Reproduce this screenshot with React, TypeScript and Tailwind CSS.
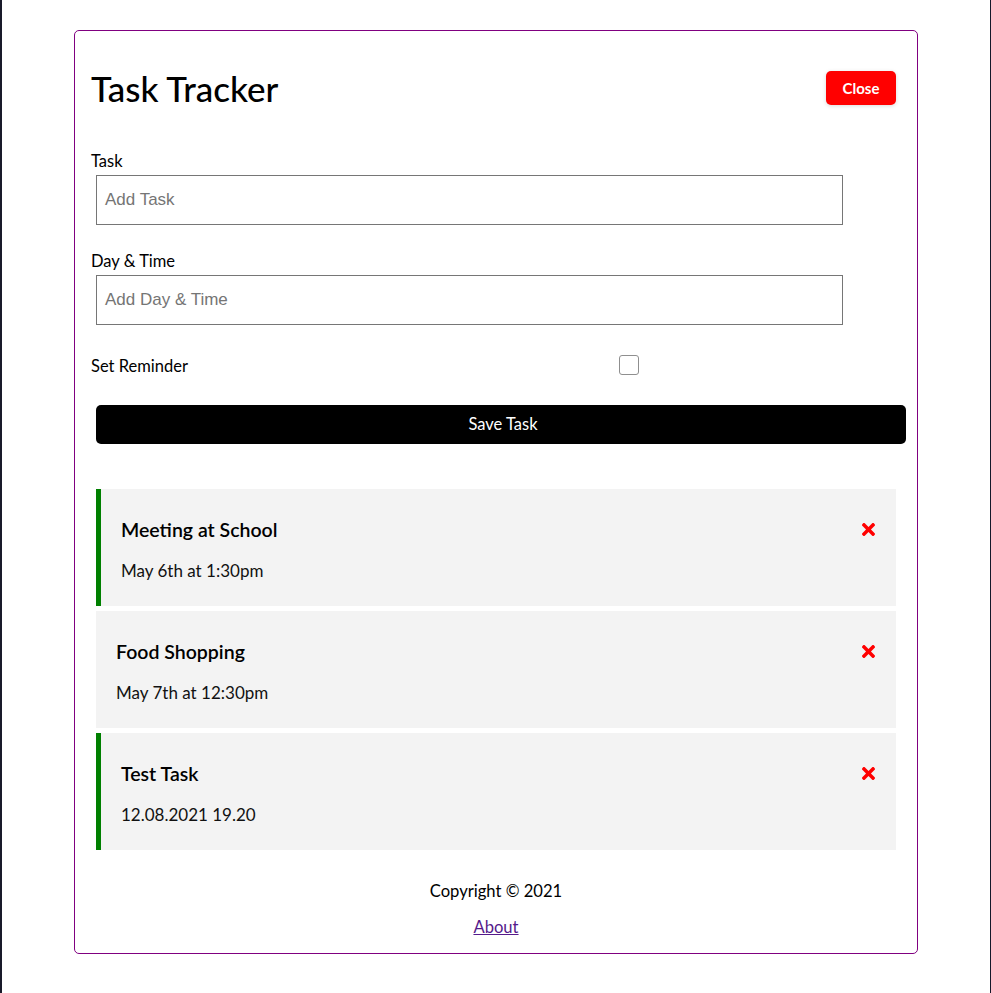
import React from "react";
import { FaTimes } from "react-icons/fa";

const tasks = [
  { title: "Meeting at School", day: "May 6th at 1:30pm", reminder: true },
  { title: "Food Shopping", day: "May 7th at 12:30pm", reminder: false },
  { title: "Test Task", day: "12.08.2021 19.20", reminder: true },
];

export default function App() {
  return (
    <div className="flex min-h-[993px] w-full bg-white" style={{ fontFamily: "Lato, 'Noto Sans', sans-serif" }}>
      <div className="w-[2px] shrink-0 bg-[#191a2a]" />
      <div className="flex-1 pt-[30px]">
        <div className="mx-auto flex h-[924px] w-[844px] flex-col rounded-[5px] border border-[#800080] px-[16px] pt-[27px] text-black">
          <header className="flex h-[60px] items-center justify-between">
            <h1 className="text-[35px] font-medium leading-none">Task Tracker</h1>
            <button className="mr-[5px] flex h-[34px] w-[70px] items-center justify-center rounded-[5px] bg-[#ff0000] text-[15px] font-bold text-white shadow-[0_1px_4px_rgba(0,0,0,0.15)]">
              Close
            </button>
          </header>

          <div className="mt-[31px] text-[16.5px] leading-[24px]">Task</div>
          <div className="mt-[2px] ml-[5px] flex h-[50px] w-[747px] items-center border border-[#767676] px-[8px] text-[17px] text-[#757575]" style={{ fontFamily: "'Liberation Sans', Arial, sans-serif" }}>
            Add Task
          </div>

          <div className="mt-[24px] text-[16.5px] leading-[24px]">Day &amp; Time</div>
          <div className="mt-[2px] ml-[5px] flex h-[50px] w-[747px] items-center border border-[#767676] px-[8px] text-[17px] text-[#757575]" style={{ fontFamily: "'Liberation Sans', Arial, sans-serif" }}>
            Add Day &amp; Time
          </div>

          <div className="mt-[28px] flex h-[24px] items-center">
            <div className="w-[270px] pt-[1px] text-[16.5px] leading-[24px]">Set Reminder</div>
            <div className="flex flex-1 justify-center pr-[4px]">
              <div className="h-[20px] w-[20px] rounded-[3px] border border-[#8f8f8f] bg-white" />
            </div>
          </div>

          <button className="mt-[28px] ml-[5px] flex h-[39px] w-[810px] shrink-0 items-center justify-center rounded-[5px] bg-black pl-[4px] text-[16.5px] text-white">
            Save Task
          </button>

          <div className="mt-[45px] flex flex-col gap-[5px] pl-[5px] pr-[5px]">
            {tasks.map((t) => (
              <div
                key={t.title}
                className={`flex h-[117px] w-[800px] justify-between bg-[#f3f3f3] pr-[18px] ${t.reminder ? "border-l-[5px] border-[#008000] pl-[20px]" : "pl-[20px]"}`}
              >
                <div className="flex flex-col pt-[29px]">
                  <div className="text-[19.5px] font-semibold leading-[24px]">{t.title}</div>
                  <div className="mt-[17px] text-[17px] leading-[24px] text-[#111]">{t.day}</div>
                </div>
                <div className="pt-[31px]">
                  <FaTimes className="text-[#ff0000]" size={19} />
                </div>
              </div>
            ))}
          </div>

          <footer className="mt-[29px] flex flex-col items-center">
            <div className="text-[16.6px] leading-[24px]">Copyright © 2021</div>
            <a href="#" className="mt-[12px] text-[16.6px] leading-[24px] text-[#551a8b] underline">
              About
            </a>
          </footer>
        </div>
      </div>
      <div className="w-[1px] shrink-0 bg-[#14182a]" />
    </div>
  );
}
